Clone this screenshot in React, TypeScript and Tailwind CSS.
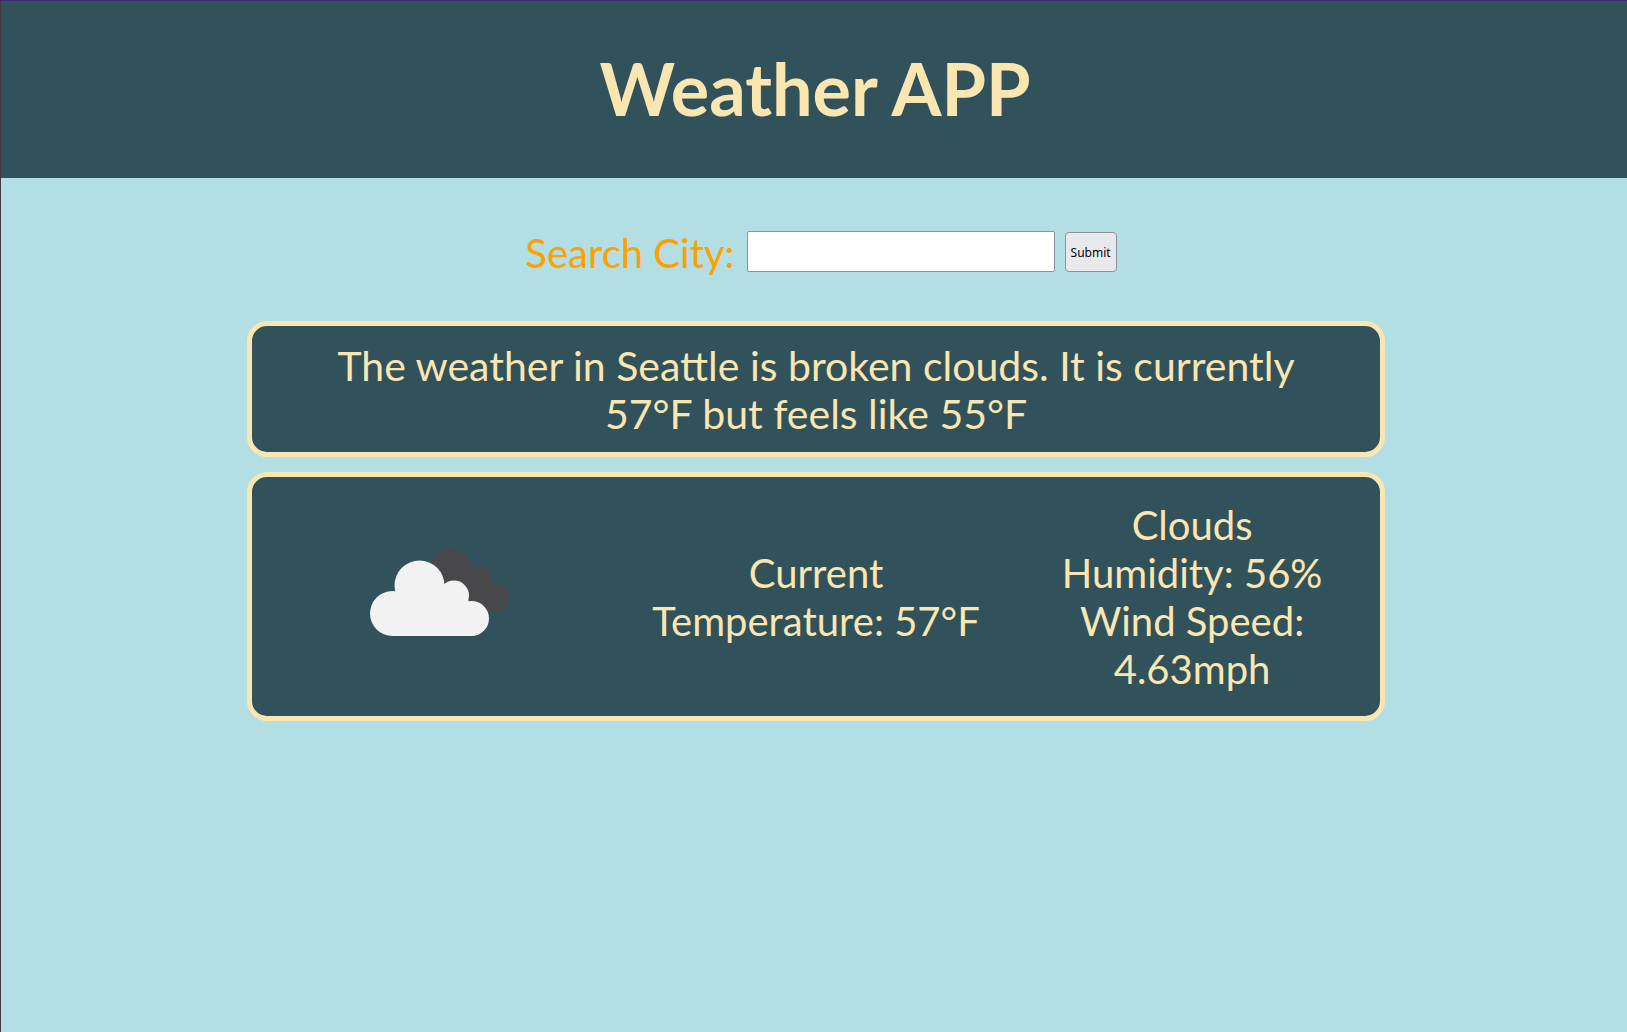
import { useState } from "react";

function BrokenClouds() {
  return (
    <svg viewBox="0 0 200 200" className="size-[200px]" role="img" aria-label="Broken clouds">
      <g fill="#48484a">
        <circle cx="110.5" cy="73" r="21" />
        <circle cx="140" cy="81.5" r="12" />
        <circle cx="154.5" cy="100.5" r="14.5" />
        <path d="M92 78.5L131 68.5L152 81.5L155 115H120Z" />
      </g>
      <g fill="#f2f2f2">
        <circle cx="52.5" cy="116.5" r="22.5" />
        <circle cx="79.5" cy="88.5" r="25" />
        <circle cx="114" cy="98.5" r="15" />
        <circle cx="131.5" cy="121.5" r="17.5" />
        <path d="M55 94.5H104L128.5 103.5L131.5 139H52.5V115Z" />
      </g>
    </svg>
  );
}

export default function App() {
  const [city, setCity] = useState("");

  return (
    <div className="min-h-screen border-t border-l border-t-[#3b2f72] border-l-[#423a42] bg-[#b2dee4] font-['Lato',sans-serif] text-[40px] leading-[48px]">
      <header className="bg-[#32525b] pt-[45px] pb-[47px] text-center text-[#fae6b1]">
        <h1 className="pl-[2px] text-[72px] leading-[85px] font-bold">Weather APP</h1>
      </header>

      <main>
        <form
          className="flex items-start justify-center gap-[10px] pt-[51px] pb-11 pl-[14px]"
          onSubmit={(event) => event.preventDefault()}
        >
          <label htmlFor="city" className="pr-[2px] text-[#ffa000]">
            Search City:
          </label>
          <input
            id="city"
            type="text"
            value={city}
            onChange={(event) => setCity(event.target.value)}
            className="mt-[2px] h-[41px] w-[308px] rounded-[2px] border border-[#8f8f9d] bg-white px-2 text-base text-black"
          />
          <button
            type="submit"
            className="mt-[3px] h-10 rounded border border-[#8f8f9d] bg-[#e9e9ed] px-[5px] pt-[2px] font-['Noto_Sans',sans-serif] text-xs text-black"
          >
            Submit
          </button>
        </form>

        <div className="mr-[calc(15%-2px)] ml-auto flex w-[70%] flex-col gap-[15px] text-center text-[#fae6b1]">
          <section className="rounded-[20px] border-[5px] border-[#fae6b1] bg-[#32525b] px-20 pt-4 pb-[14px] text-[41px]">
            <p>The weather in Seattle is broken clouds. It is currently 57°F but feels like 55°F</p>
          </section>

          <section className="grid grid-cols-3 items-center rounded-[20px] border-[5px] border-[#fae6b1] bg-[#32525b] pt-6 pb-[23px]">
            <div className="flex h-48 items-center justify-center">
              <BrokenClouds />
            </div>
            <p>
              Current
              <br />
              Temperature: 57°F
            </p>
            <div>
              <p>Clouds</p>
              <p>Humidity: 56%</p>
              <p>
                Wind Speed:
                <br />
                4.63mph
              </p>
            </div>
          </section>
        </div>
      </main>
    </div>
  );
}
